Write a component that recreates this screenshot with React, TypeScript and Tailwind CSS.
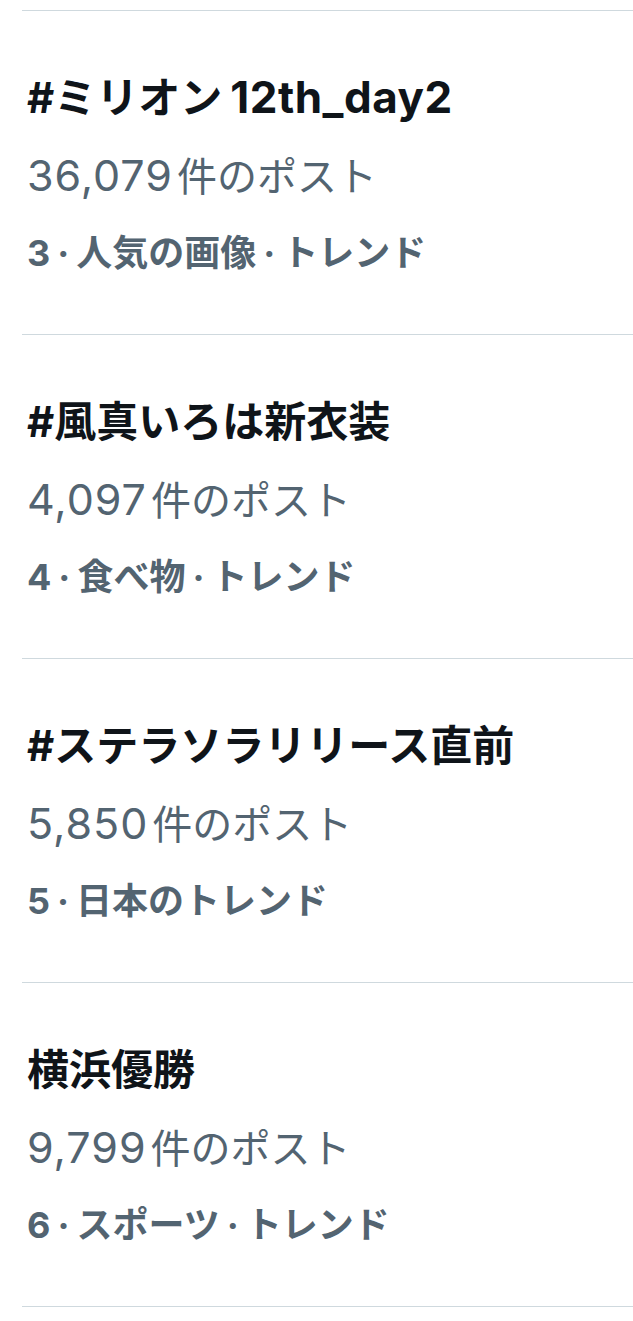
const trends = [
  { rank: 3, title: ["#ミリオン", "12th_day2"], count: "36,079", meta: ["人気の画像", "トレンド"] },
  { rank: 4, title: ["#風真いろは新衣装"], count: "4,097", meta: ["食べ物", "トレンド"] },
  { rank: 5, title: ["#ステラソラリリース直前"], count: "5,850", meta: ["日本のトレンド"] },
  { rank: 6, title: ["横浜優勝"], count: "9,799", meta: ["スポーツ", "トレンド"] },
];

function TrendRow({ trend }: { trend: (typeof trends)[number] }) {
  return (
    <div className="border-b border-[#cfd9de] pl-[5px] pr-4 pt-[49px] pb-[43px]">
      <div className="text-[42px] leading-[76px] font-bold text-[#0f1419] whitespace-nowrap">
        {trend.title[0]}
        {trend.title[1] && (
          <span className="ml-[8px] text-[44px] leading-none tracking-[0.5px]">{trend.title[1]}</span>
        )}
      </div>
      <div className="mt-[3px] text-[40px] leading-[76px] text-[#536471] whitespace-nowrap">
        <span className="text-[43px] leading-none tracking-[1px]">{trend.count}</span>
        <span className="ml-[4px]">件のポスト</span>
      </div>
      <div className="text-[36px] leading-[76px] font-bold text-[#536471] whitespace-nowrap">
        {trend.rank}
        {trend.meta.map((m) => (
          <span key={m}>
            <span className="mx-[7px]">·</span>
            {m}
          </span>
        ))}
      </div>
    </div>
  );
}

export default function App() {
  return (
    <div
      className="w-[633px] min-h-[1321px] bg-white pt-[10px]"
      style={{ fontFamily: 'Inter, "Noto Sans CJK JP", sans-serif' }}
    >
      <div className="ml-[22px] border-t border-[#cfd9de]">
        {trends.map((t) => (
          <TrendRow key={t.rank} trend={t} />
        ))}
      </div>
    </div>
  );
}
